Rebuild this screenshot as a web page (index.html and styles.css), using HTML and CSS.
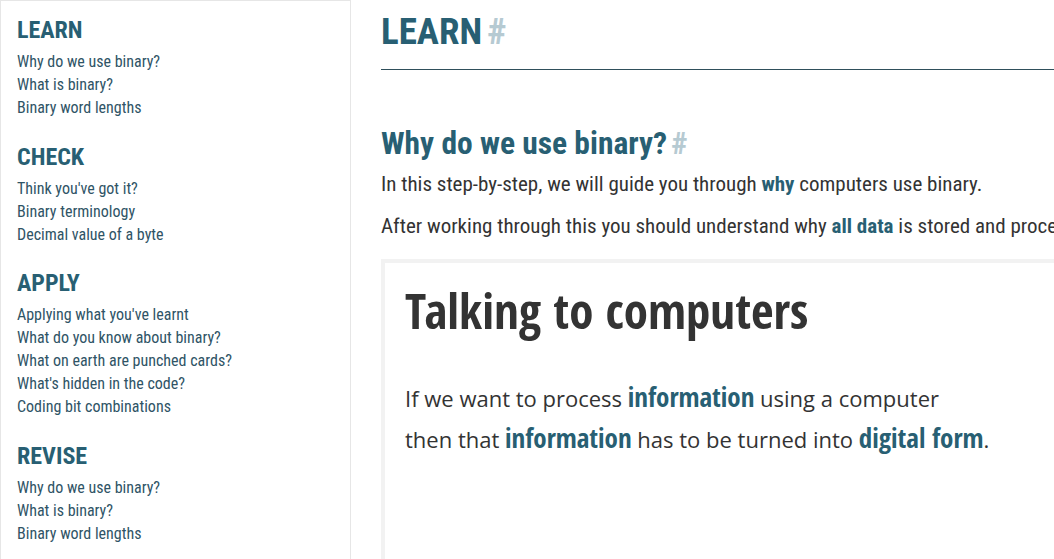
FILE: index.html
```
<!DOCTYPE html>
<html lang="en">
<head>
<meta charset="utf-8">
<title>Learn binary</title>
<link rel="stylesheet" href="styles.css">
</head>
<body>
<div class="page">
  <nav class="sidebar">
    <section class="nav-section">
      <h2 class="nav-title">LEARN</h2>
      <ul class="nav-list">
        <li><a href="#">Why do we use binary?</a></li>
        <li><a href="#">What is binary?</a></li>
        <li><a href="#">Binary word lengths</a></li>
      </ul>
    </section>
    <section class="nav-section">
      <h2 class="nav-title">CHECK</h2>
      <ul class="nav-list">
        <li><a href="#">Think you've got it?</a></li>
        <li><a href="#">Binary terminology</a></li>
        <li><a href="#">Decimal value of a byte</a></li>
      </ul>
    </section>
    <section class="nav-section">
      <h2 class="nav-title">APPLY</h2>
      <ul class="nav-list">
        <li><a href="#">Applying what you've learnt</a></li>
        <li><a href="#">What do you know about binary?</a></li>
        <li><a href="#">What on earth are punched cards?</a></li>
        <li><a href="#">What's hidden in the code?</a></li>
        <li><a href="#">Coding bit combinations</a></li>
      </ul>
    </section>
    <section class="nav-section">
      <h2 class="nav-title">REVISE</h2>
      <ul class="nav-list">
        <li><a href="#">Why do we use binary?</a></li>
        <li><a href="#">What is binary?</a></li>
        <li><a href="#">Binary word lengths</a></li>
      </ul>
    </section>
  </nav>
  <main class="content">
    <h1 class="page-title">LEARN<a class="anchor" href="#">#</a></h1>
    <h2 class="section-title">Why do we use binary?<a class="anchor" href="#">#</a></h2>
    <p class="lead">In this step-by-step, we will guide you through <strong>why</strong> computers use binary.</p>
    <p class="lead">After working through this you should understand why <strong>all data</strong> is stored and processed by computers in binary form.</p>
    <div class="card">
      <h3 class="card-title">Talking to computers</h3>
      <p class="card-text">If we want to process <strong>information</strong> using a computer<br>then that <strong>information</strong> has to be turned into <strong>digital form</strong>.</p>
    </div>
  </main>
</div>
</body>
</html>
```
FILE: styles.css
```
html, body {
  margin: 0;
  padding: 0;
  overflow: hidden;
  background: #fff;
}
body {
  font-family: "Roboto Condensed", Roboto, sans-serif;
  color: #333;
}
.page {
  display: flex;
  align-items: flex-start;
  width: 1600px;
}
.sidebar {
  flex: 0 0 333px;
  border: 1px solid #e6e6e6;
  padding: 15px 0 40px 16px;
  min-height: 700px;
}
.nav-section {
  margin-bottom: 23px;
}
.nav-title {
  margin: 0 0 7px;
  font-size: 24px;
  line-height: 28px;
  font-weight: 700;
  color: #285f73;
}
.nav-list {
  list-style: none;
  margin: 0;
  padding: 0;
}
.nav-list li {
  font-size: 16px;
  line-height: 22.9px;
}
.nav-list a {
  color: #2f5466;
  text-decoration: none;
}
.content {
  flex: 1;
  padding: 9px 0 0 30px;
}
.page-title {
  margin: 0;
  font-size: 37px;
  line-height: 45.6px;
  font-weight: 700;
  color: #285f73;
  padding-bottom: 14px;
  border-bottom: 1px solid #2f4f5b;
}
.anchor {
  color: #b6cad2;
  text-decoration: none;
  margin-left: 5px;
  font-weight: 700;
}
.section-title {
  margin: 55px 0 8px;
  font-size: 31.5px;
  line-height: 38.4px;
  font-weight: 700;
  color: #285f73;
}
.section-title .anchor {
  margin-left: 4px;
}
.lead {
  margin: 0 0 15px;
  font-size: 21px;
  line-height: 27px;
  font-weight: 400;
  color: #333;
}
.lead strong {
  color: #285f73;
  font-weight: 700;
}
.card {
  margin-top: 19px;
  border-top: 4px solid #f2f2f2;
  border-left: 4px solid #f2f2f2;
  padding: 15px 20px 100px 20px;
}
.card-title {
  margin: 0;
  font-family: "Open Sans Condensed", "Open Sans", sans-serif;
  font-size: 49px;
  line-height: 64px;
  font-weight: 700;
  color: #333;
}
.card-text {
  margin: 35px 0 0;
  font-family: "Open Sans", sans-serif;
  font-size: 22px;
  line-height: 40px;
  font-weight: 400;
  color: #333;
}
.card-text strong {
  font-family: "Open Sans Condensed", "Open Sans", sans-serif;
  font-size: 27px;
  font-weight: 700;
  color: #285f73;
}
```
